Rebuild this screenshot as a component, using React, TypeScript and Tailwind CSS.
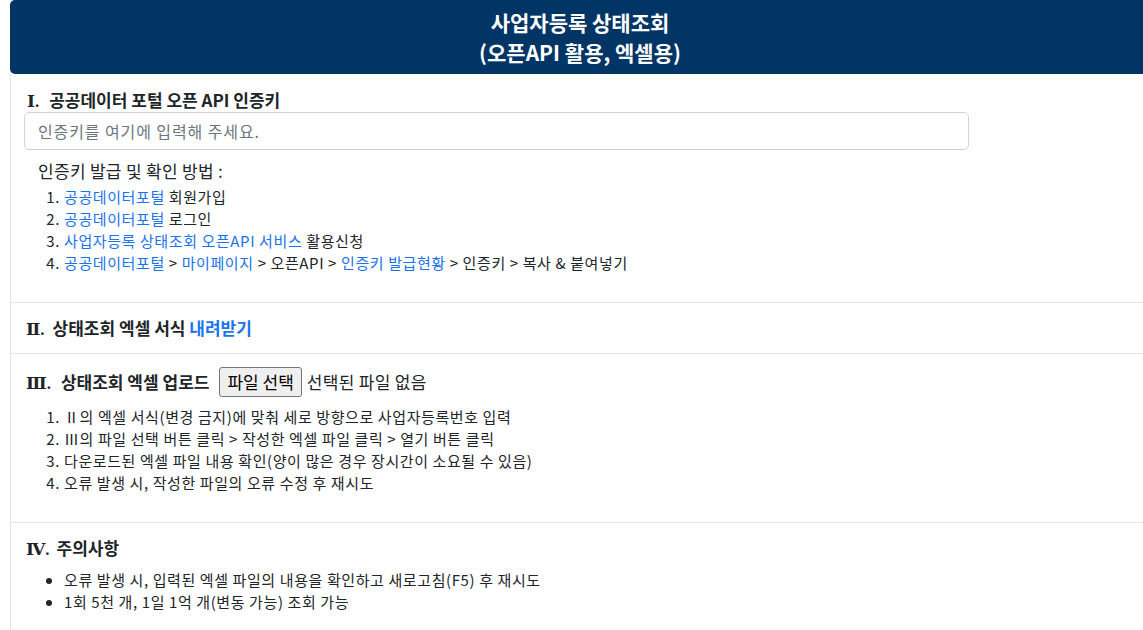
import React from 'react';

const FONT = { fontFamily: '"Noto Sans CJK KR", "Noto Sans", sans-serif' };

const Numeral = ({ n }: { n: string }) => (
    <span className="font-bold text-[17px]" style={{ fontFamily: '"Liberation Serif", "DejaVu Serif", serif' }}>
        {n}.
    </span>
);

const Heading = ({ n, gap, children }: { n: string; gap: string; children: React.ReactNode }) => (
    <div className="flex items-baseline h-[20px] leading-[20px] text-[17px] font-bold text-[#212529]">
        <Numeral n={n} />
        <span className={gap}>{children}</span>
    </div>
);

const A = ({ children }: { children: React.ReactNode }) => (
    <a href="#" className="text-[#1a73f0] no-underline">{children}</a>
);

export default function App() {
    return (
        <div className="min-h-screen bg-white text-[#212529]" style={FONT}>
            <div className="ml-[10px] w-[1140px]">
                {/* header */}
                <header className="bg-[#003566] rounded-[5px] py-[7px] text-center text-white font-bold text-[21px] leading-[30px]">
                    <div>사업자등록 상태조회</div>
                    <div>(오픈API 활용, 엑셀용)</div>
                </header>

                <div className="border-l border-[#e4e4e4]">
                    {/* I */}
                    <section className="pl-[16px] pt-[16px] pb-[28px] border-b border-[#e4e4e4]">
                        <Heading n="Ⅰ" gap="ml-[10px]">공공데이터 포털 오픈 API 인증키</Heading>
                        <input
                            type="text"
                            placeholder="인증키를 여기에 입력해 주세요."
                            className="mt-[2px] -ml-[3px] w-[945px] h-[38px] border border-[#ced4da] rounded-[5px] px-[13px] text-[16px] tracking-[0.9px] placeholder:text-[#6c757d] outline-none"
                            style={FONT}
                        />
                        <p className="mt-[10px] ml-[11px] text-[17px] tracking-[0.3px] leading-[22px]">인증키 발급 및 확인 방법 :</p>
                        <ol className="mt-[4px] list-decimal pl-[37px] text-[15px] tracking-[0.6px] leading-[22px]">
                            <li><A>공공데이터포털</A> 회원가입</li>
                            <li><A>공공데이터포털</A> 로그인</li>
                            <li><A>사업자등록 상태조회 오픈API 서비스</A> 활용신청</li>
                            <li>
                                <A>공공데이터포털</A> &gt; <A>마이페이지</A> &gt; 오픈API &gt; <A>인증키 발급현황</A> &gt; 인증키 &gt; 복사 &amp; 붙여넣기
                            </li>
                        </ol>
                    </section>

                    {/* II */}
                    <section className="pl-[15px] pt-[15px] pb-[15px] border-b border-[#e4e4e4]">
                        <Heading n="Ⅱ" gap="ml-[8px]">
                            상태조회 엑셀 서식 <A>내려받기</A>
                        </Heading>
                    </section>

                    {/* III */}
                    <section className="pl-[15px] pt-[13px] pb-[28px] border-b border-[#e4e4e4]">
                        <div className="flex items-center h-[30px]">
                            <Heading n="Ⅲ" gap="ml-[10px]">상태조회 엑셀 업로드</Heading>
                            <button
                                type="button"
                                className="ml-[10px] h-[30px] px-[7px] bg-[#efefef] border border-[#767676] rounded-[3px] text-[17px] text-black"
                                style={FONT}
                            >
                                파일 선택
                            </button>
                            <span className="ml-[5px] text-[17px] tracking-[0.3px]">선택된 파일 없음</span>
                        </div>
                        <ol className="mt-[9px] list-decimal pl-[38px] text-[15px] tracking-[0.6px] leading-[22px]">
                            <li>Ⅱ의 엑셀 서식(변경 금지)에 맞춰 세로 방향으로 사업자등록번호 입력</li>
                            <li>Ⅲ의 파일 선택 버튼 클릭 &gt; 작성한 엑셀 파일 클릭 &gt; 열기 버튼 클릭</li>
                            <li>다운로드된 엑셀 파일 내용 확인(양이 많은 경우 장시간이 소요될 수 있음)</li>
                            <li>오류 발생 시, 작성한 파일의 오류 수정 후 재시도</li>
                        </ol>
                    </section>

                    {/* IV */}
                    <section className="pl-[15px] pt-[15px] pb-[20px]">
                        <Heading n="Ⅳ" gap="ml-[7px]">주의사항</Heading>
                        <ul className="mt-[11px] list-disc pl-[38px] text-[15px] tracking-[0.6px] leading-[22px]">
                            <li>오류 발생 시, 입력된 엑셀 파일의 내용을 확인하고 새로고침(F5) 후 재시도</li>
                            <li>1회 5천 개, 1일 1억 개(변동 가능) 조회 가능</li>
                        </ul>
                    </section>
                </div>
            </div>
        </div>
    );
}
